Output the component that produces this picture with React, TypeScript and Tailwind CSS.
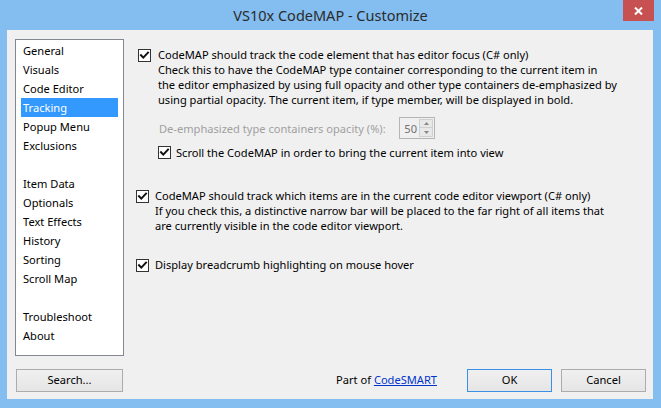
import React from "react";

const FONT = { fontFamily: '"Noto Sans", "Open Sans", Arial, sans-serif' };

function Check() {
  return (
    <svg width="13" height="13" viewBox="0 0 13 13" className="shrink-0">
      <rect x="0.5" y="0.5" width="12" height="12" fill="#ffffff" stroke="#333333" />
      <path d="M3 6.2 L5.3 8.6 L10 3.6" fill="none" stroke="#111111" strokeWidth="2" strokeLinecap="square" />
    </svg>
  );
}

const items: (string | null)[] = [
  "General",
  "Visuals",
  "Code Editor",
  "Tracking",
  "Popup Menu",
  "Exclusions",
  null,
  "Item Data",
  "Optionals",
  "Text Effects",
  "History",
  "Sorting",
  "Scroll Map",
  null,
  "Troubleshoot",
  "About",
];

function Btn({ children, w, primary }: { children: React.ReactNode; w: string; primary?: boolean }) {
  return (
    <div
      className={`${w} h-[23px] flex items-center justify-center text-black bg-gradient-to-b from-[#f0f0f0] to-[#e5e5e5] border ${
        primary ? "border-[#3c8fe6]" : "border-[#acacac]"
      }`}
    >
      {children}
    </div>
  );
}

export default function App() {
  return (
    <div className="w-[661px] h-[408px] bg-[#84bdef] flex flex-col text-[11.1px] text-black" style={FONT}>
      <div className="relative h-[30px] flex items-center justify-center shrink-0">
        <span className="text-[14.5px] text-[#2b2b2b] leading-none">VS10x CodeMAP - Customize</span>
        <div className="absolute top-0 right-[7px] w-[31px] h-[21px] bg-[#c75050] flex items-center justify-center">
          <svg width="9" height="8" viewBox="0 0 9 8">
            <path d="M1 0.5 L8 7.5 M8 0.5 L1 7.5" stroke="#ffffff" strokeWidth="2" />
          </svg>
        </div>
      </div>
      <div className="ml-[7px] mr-[8px] mb-[9px] h-[369px] bg-[#f0f0f0] flex flex-col pl-[8px] pr-[7px] pt-[9px] pb-[7px]">
        <div className="flex h-[317px]">
          <div className="w-[109px] h-[317px] shrink-0 bg-white border border-[#828790] px-[5px] pt-[1px] flex flex-col">
            {items.map((it, i) =>
              it === null ? (
                <div key={i} className="h-[19px]" />
              ) : (
                <div
                  key={i}
                  className={`h-[19px] leading-[19px] pl-[2px] whitespace-nowrap ${
                    it === "Tracking" ? "bg-[#3399ff] text-white" : "text-black"
                  }`}
                >
                  {it}
                </div>
              )
            )}
          </div>
          <div className="ml-[12px] flex flex-col leading-[15px] min-w-0">
            <div className="flex mt-[8px] pl-[2px]">
              <div className="mt-[2px]">
                <Check />
              </div>
              <div className="ml-[7px] whitespace-nowrap">
                <div>CodeMAP should track the code element that has editor focus (C# only)</div>
                <div>Check this to have the CodeMAP type container corresponding to the current item in</div>
                <div>the editor emphasized by using full opacity and other type containers de-emphasized by</div>
                <div>using partial opacity. The current item, if type member, will be displayed in bold.</div>
              </div>
            </div>
            <div className="flex items-center mt-[10px] pl-[23px] h-[22px]">
              <div className="w-[240px] text-[#a0a0a0] whitespace-nowrap">De-emphasized type containers opacity (%):</div>
              <div className="w-[36px] h-[22px] border border-[#b5b5b5] bg-[#f0f0f0] flex items-center">
                <span className="flex-1 text-right pr-[2px] text-[#707070]">50</span>
                <div className="w-[14px] h-[18px] flex flex-col mr-[1px]">
                  <div className="h-[9px] bg-[#e8e8e8] border border-[#d0d0d0] flex items-center justify-center">
                    <svg width="5" height="3" viewBox="0 0 5 3">
                      <path d="M0 3 L2.5 0 L5 3 Z" fill="#888888" />
                    </svg>
                  </div>
                  <div className="h-[9px] bg-[#e8e8e8] border border-t-0 border-[#d0d0d0] flex items-center justify-center">
                    <svg width="5" height="3" viewBox="0 0 5 3">
                      <path d="M0 0 L2.5 3 L5 0 Z" fill="#888888" />
                    </svg>
                  </div>
                </div>
              </div>
            </div>
            <div className="flex items-center mt-[6px] pl-[22px] h-[15px]">
              <Check />
              <span className="ml-[5px] whitespace-nowrap">Scroll the CodeMAP in order to bring the current item into view</span>
            </div>
            <div className="flex mt-[28px]">
              <div className="mt-[2px]">
                <Check />
              </div>
              <div className="ml-[6px] whitespace-nowrap">
                <div>CodeMAP should track which items are in the current code editor viewport (C# only)</div>
                <div>If you check this, a distinctive narrow bar will be placed to the far right of all items that</div>
                <div>are currently visible in the code editor viewport.</div>
              </div>
            </div>
            <div className="flex mt-[24px]">
              <div className="mt-[2px]">
                <Check />
              </div>
              <div className="ml-[6px] whitespace-nowrap">Display breadcrumb highlighting on mouse hover</div>
            </div>
          </div>
        </div>
        <div className="flex items-center mt-[13px] h-[23px]">
          <div className="ml-[1px]">
            <Btn w="w-[107px]">Search...</Btn>
          </div>
          <div className="flex-1" />
          <span className="whitespace-nowrap">
            Part of <span className="text-[#0033cc] underline">CodeSMART</span>
          </span>
          <div className="ml-[30px]">
            <Btn w="w-[85px]" primary>
              OK
            </Btn>
          </div>
          <div className="ml-[9px]">
            <Btn w="w-[85px]">Cancel</Btn>
          </div>
        </div>
      </div>
    </div>
  );
}
